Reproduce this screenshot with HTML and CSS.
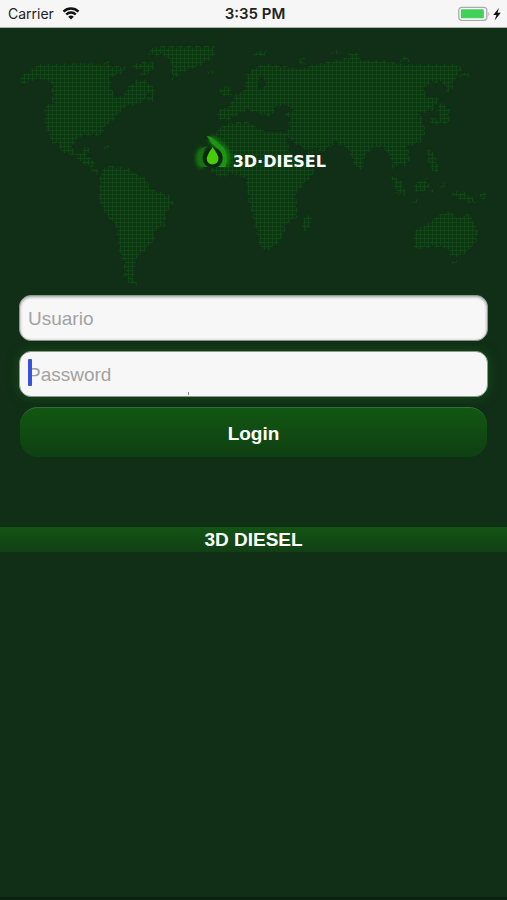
FILE: index.html
```html
<!DOCTYPE html>
<html lang="es">
<head>
<meta charset="utf-8">
<meta name="viewport" content="width=device-width, initial-scale=1">
<title>3D Diesel</title>
<link rel="stylesheet" href="styles.css">
</head>
<body>
<header class="status">
  <div class="status-left">
    <span>Carrier</span>
    <svg class="wifi" viewBox="0 0 18 13" aria-hidden="true">
      <path d="M1.5 4.6a10.8 10.8 0 0 1 15 0M4.2 7.5a6.8 6.8 0 0 1 9.6 0" fill="none" stroke="#111" stroke-width="2.4"/>
      <path d="M9 12.6 6.2 9.8a4 4 0 0 1 5.6 0z" fill="#111"/>
    </svg>
  </div>
  <time class="clock">3:35 PM</time>
  <svg class="battery" viewBox="0 0 44 16" aria-hidden="true">
    <rect x=".8" y="1.3" width="28" height="13" rx="3" fill="#fff" stroke="#aaa" stroke-width="1.3"/>
    <rect x="2.8" y="3.3" width="23" height="9" rx="1" fill="#3fd158"/>
    <path d="M30.4 6q2 2 0 4z" fill="#aaa"/>
    <path d="M41 2 35.2 9h3.2L36.6 14.4l6.2-7.6h-3.3z" fill="#111"/>
  </svg>
</header>
<main>
  <section class="hero">
    <svg class="map" viewBox="0 0 1521 780" aria-hidden="true">
      <defs>
        <pattern id="dots" width="12" height="12" patternUnits="userSpaceOnUse">
          <rect width="12" height="12" fill="#0d3512"/>
          <path d="M0 1.5H12M1.5 0V12" stroke="#124518" stroke-width="3"/>
        </pattern>
      </defs>
      <g fill="url(#dots)" stroke="#112e17" stroke-width="8" stroke-dasharray="10 16">
        <path d="M60 132 84 130 110 102 275 98 310 104 375 110 375 128 332 142 334 174 348 200 368 198 386 168 412 148 440 150 465 176 465 194 410 226 378 228 350 260 318 290 300 322 286 316 244 318 218 346 224 366 244 370 248 352 270 350 262 378 284 390 280 414 304 426 290 434 264 410 240 398 226 378 180 366 178 342 158 344 142 306 134 286 134 228 156 218 154 160 130 148 104 150 64 164z"/>
        <path d="M446 58 480 48 645 48 645 78 605 106 544 128 516 152 512 98 490 76 446 76zM306 94h24v10h-24zM390 106 435 94 465 98 462 118 432 140 414 128 434 122 400 116zM618 122h30v10h-30zM306 348h22v10h-22zM444 194h20v22h-20z"/>
        <path d="M300 428 324 406 388 414 408 432 434 440 454 476 512 496 520 522 500 544 496 588 468 600 464 632 432 666 412 684 404 708 404 750 418 768 390 764 372 736 372 694 360 682 348 590 318 556 296 510z"/>
        <path d="M654 232 676 234 690 222 700 198 732 180 740 132 770 108 790 102 840 106 900 116 940 104 1000 92 1045 82 1045 68 1080 68 1080 90 1160 92 1210 102 1370 102 1392 118 1364 150 1358 180 1342 188 1330 158 1290 158 1272 180 1284 202 1322 200 1298 242 1264 250 1278 306 1264 336 1224 352 1232 386 1216 410 1192 402 1180 430 1172 386 1150 354 1128 350 1096 374 1088 422 1064 410 1044 358 1008 338 972 364 926 376 922 362 890 346 862 326 870 362 894 390 950 420 936 438 888 490 894 560 858 584 856 604 836 640 808 662 780 658 766 592 744 510 736 444 700 432 658 444 634 426 614 384 640 330 654 296 684 278 744 274 780 298 812 306 862 304 868 264 832 232 810 262 772 250 742 242 710 256 688 272 652 268z"/>
        <path d="M924 546 936 566 926 600 908 604 904 578zM658 174 694 166 696 200 662 198zM896 82h18v22h-18zM994 62h28v10h-28zM760 66 800 60 798 78 760 80zM1200 80h28v16h-28zM1308 242 1324 214 1350 240 1348 280 1328 282 1292 284 1286 264 1322 264zM1380 128h30v12h-30z"/>
        <path d="M1170 432 1206 454 1222 500 1190 492zM1240 462 1282 444 1290 474 1264 488 1244 484zM1280 352 1304 370 1320 424 1300 430 1284 394zM1234 508h22v10h-22zM1292 470 1304 488 1290 496zM1348 484 1392 484 1422 504 1428 522 1404 518 1362 500zM1440 488h18v20h-18zM1322 456h12v20h-12z"/>
        <path d="M1240 600 1290 576 1310 556 1340 546 1360 544 1358 556 1384 562 1402 540 1420 572 1436 606 1430 634 1404 666 1378 682 1350 678 1340 656 1304 650 1242 660zM1356 690h14v12h-14z"/>
      </g>
      <path d="M772 166 786 130 798 164 780 178zM828 236 850 222 884 240 852 252zM926 358l30-4v8h-30zM858 318l16 14 8 24-14-10z" fill="#112e17"/>
    </svg>
    <div class="brand">
      <svg class="drop" viewBox="0 0 108 120" aria-hidden="true">
        <defs>
          <filter id="glow" x="-50%" y="-50%" width="200%" height="200%"><feGaussianBlur stdDeviation="6"/></filter>
        </defs>
        <g fill="none" stroke="#187a0b" stroke-width="20" filter="url(#glow)"><path d="M46 22 84 54Q98 76 86 98M26 100Q8 76 28 52"/></g>
        <path d="M37 16 50 19 82 47Q98 68 88 101H68Q81 91 81 75 80 63 70 53L50 37z" fill="#1d9414"/>
        <path d="M42 43Q25 51 23 71 22 91 41 101H22Q6 72 23 52 30 45 42 43z" fill="#187013"/>
        <circle cx="53" cy="76" r="27" fill="#0a2811"/>
        <path d="M53 47Q67 66 69 76 69 93 53 94 37 93 37 77 39 66 53 47z" fill="#48cb08"/>
      </svg>
      <span class="brand-name">3D·DIESEL</span>
    </div>
  </section>
  <form class="login">
    <input class="field" type="text" aria-label="Usuario" placeholder="Usuario">
    <div class="focused">
      <input class="field" type="password" aria-label="Password" placeholder="Password">
      <span class="caret"></span>
      <span class="speck"></span>
    </div>
    <button class="submit" type="button">Login</button>
  </form>
</main>
<footer class="footer">3D DIESEL</footer>
</body>
</html>
```
FILE: styles.css
```css
* { box-sizing: border-box; }

body {
  margin: 0;
  min-height: 100vh;
  background: #112e17;
  border-bottom: 3px solid #0b2111;
  color: #fff;
  font-family: "Liberation Sans", Arial, sans-serif;
}

.status {
  display: grid;
  grid-template-columns: 1fr auto 1fr;
  align-items: center;
  height: 28px;
  padding: 0 5px 0 8px;
  border-bottom: 1px solid #a9b5aa;
  background: #f6f6f6;
  color: #222;
  font: 14px Inter, sans-serif;
}

.status-left { display: flex; align-items: center; gap: 8px; }
.wifi { width: 18px; height: 13px; }
.clock { font-size: 15px; font-weight: 600; }
.battery { width: 44px; height: 16px; justify-self: end; }

.hero { position: relative; padding-top: 2px; }
.map { display: block; width: 100%; }

.brand {
  position: absolute;
  top: 39%;
  left: 38%;
  display: flex;
  align-items: flex-end;
}

.drop { width: 40px; height: 44px; }

.brand-name {
  font: bold 16px/24px "DejaVu Sans", sans-serif;
}

.login {
  display: flex;
  flex-direction: column;
  gap: 10px;
  padding: 5px 19px 0;
}

.field {
  display: block;
  width: 100%;
  height: 46px;
  padding: 2px 9px 0 8px;
  border: 1px solid #879b87;
  border-radius: 12px;
  outline: 0;
  background: #f7f7f7;
  box-shadow: inset 0 1px 3px #999;
  color: #222;
  font: 19px "Liberation Sans", Arial, sans-serif;
}

.field::placeholder { color: #a2a2a2; opacity: 1; }

.focused { position: relative; border-radius: 12px; box-shadow: 0 0 12px #155018; }
.focused .field { box-shadow: none; }

.caret {
  position: absolute;
  top: 8px;
  left: 9px;
  width: 4px;
  height: 27px;
  border-radius: 1px;
  background: #3552df;
}

.speck {
  position: absolute;
  bottom: 2px;
  left: 36%;
  width: 1px;
  height: 3px;
  background: #7885a0;
}

.submit {
  height: 50px;
  margin: 0 1px;
  padding: 2px 0 0;
  border: 0;
  border-top: 1px solid #347037;
  border-radius: 18px;
  background: linear-gradient(#125713, #0e4011);
  color: #fff;
  font: bold 19px "Liberation Sans", Arial, sans-serif;
}

.footer {
  margin-top: 70px;
  background: linear-gradient(#125514, #113f14);
  font-size: 19px;
  font-weight: bold;
  line-height: 25px;
  text-align: center;
}
```
